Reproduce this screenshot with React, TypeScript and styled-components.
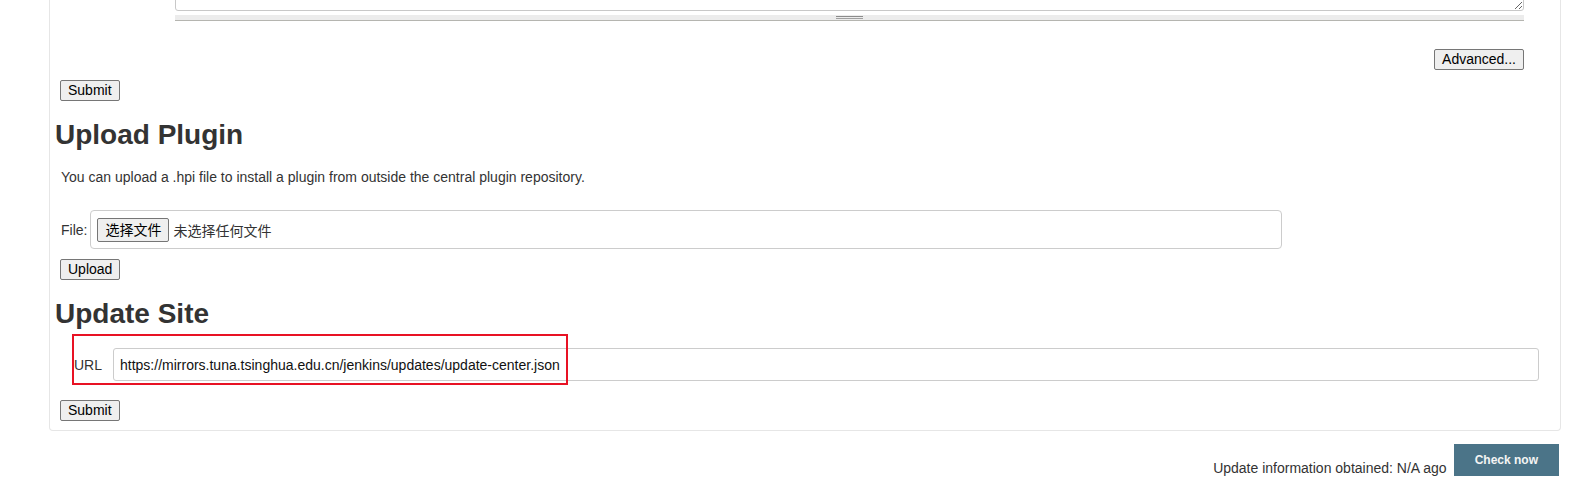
import styled, { createGlobalStyle } from 'styled-components';

const GlobalStyle = createGlobalStyle`
  body {
    margin: 0;
    background: #fff;
    color: #333;
    font-family: 'Liberation Sans', Arial, sans-serif;
    font-size: 14px;
    overflow: hidden;
  }
`;

const App = () => {
  return (
    <>
      <GlobalStyle />
      <Panel>
        <TextareaRow>
          <Textarea defaultValue="" />
          <GrabBar />
        </TextareaRow>
        <AdvancedRow>
          <Button type="button">Advanced...</Button>
        </AdvancedRow>
        <Button type="button" $top={10}>
          Submit
        </Button>

        <Heading>Upload Plugin</Heading>
        <Note>
          You can upload a .hpi file to install a plugin from outside the
          central plugin repository.
        </Note>
        <FileRow>
          <Label>File:</Label>
          <FileBox>
            <ChooseButton type="button">选择文件</ChooseButton>
            <NoFile>未选择任何文件</NoFile>
          </FileBox>
        </FileRow>
        <Button type="button" $top={10}>
          Upload
        </Button>

        <Heading>Update Site</Heading>
        <UrlRow>
          <Label>URL</Label>
          <UrlInput
            type="text"
            defaultValue="https://mirrors.tuna.tsinghua.edu.cn/jenkins/updates/update-center.json"
          />
          <Highlight />
        </UrlRow>
        <Button type="button" $top={19}>
          Submit
        </Button>
      </Panel>

      <Footer>
        <Obtained>Update information obtained: N/A ago</Obtained>
        <CheckButton type="button">Check now</CheckButton>
      </Footer>
    </>
  );
};

const Panel = styled.div`
  margin: -49px 14px 0 49px;
  padding: 0 0 9px 3px;
  border: 1px solid #e6e6e6;
  border-top: none;
  border-radius: 0 0 4px 4px;
`;

const TextareaRow = styled.div`
  margin: 0 36px 0 122px;
`;

const Textarea = styled.textarea`
  display: block;
  box-sizing: border-box;
  width: 100%;
  height: 60px;
  margin: 0;
  border: 1px solid #c8c8c8;
  border-radius: 3px;
  resize: vertical;
  font: 14px 'Liberation Mono', monospace;
`;

const GrabBar = styled.div`
  display: flex;
  justify-content: center;
  align-items: center;
  height: 5px;
  margin-top: 4px;
  background: #ececec;
  border-bottom: 1px solid #b5b5b0;

  &:after {
    content: '';
    width: 27px;
    height: 1px;
    border-top: 1px solid #8c8c8c;
    border-bottom: 1px solid #a0a0a0;
  }
`;

const AdvancedRow = styled.div`
  display: flex;
  justify-content: flex-end;
  margin: 28px 36px 0 0;
`;

const Button = styled.button<{ $top?: number }>`
  display: block;
  margin: ${(p) => (p.$top ? `${p.$top}px 0 0 7px` : '0')};
  padding: 1px 7px;
  background: #efefef;
  border: 1px solid #767676;
  border-radius: 2px;
  color: #000;
  font-family: 'Liberation Sans', Arial, sans-serif;
  font-size: 14px;
  line-height: 17px;
`;

const Heading = styled.h1`
  margin: 18px 0 18px 2px;
  color: #333;
  font-size: 28px;
  line-height: 32px;
  font-weight: bold;
`;

const Note = styled.p`
  margin: 0 0 0 8px;
  line-height: 16px;
`;

const FileRow = styled.div`
  display: flex;
  align-items: center;
  margin: 25px 0 0 8px;
`;

const Label = styled.span`
  color: #333;
  line-height: 16px;
`;

const FileBox = styled.div`
  display: flex;
  align-items: center;
  box-sizing: border-box;
  width: 1192px;
  height: 39px;
  margin-left: 3px;
  padding: 0 6px;
  border: 1px solid #ccc;
  border-radius: 4px;
`;

const ChooseButton = styled.button`
  padding: 1px 7px;
  background: #efefef;
  border: 1px solid #767676;
  border-radius: 2px;
  color: #000;
  font-family: 'Liberation Sans', 'Noto Sans CJK SC', sans-serif;
  font-size: 14px;
  line-height: 20px;
`;

const NoFile = styled.span`
  margin-left: 4px;
  color: #333;
  font-family: 'Liberation Sans', 'Noto Sans CJK SC', sans-serif;
  font-size: 14px;
`;

const UrlRow = styled.div`
  position: relative;
  display: flex;
  align-items: center;
  gap: 11px;
  margin: 0 21px 0 0;
  padding-left: 21px;
`;

const UrlInput = styled.input`
  flex: 1;
  box-sizing: border-box;
  height: 33px;
  padding: 0 6px;
  border: 1px solid #ccc;
  border-radius: 3px;
  color: #111;
  font-family: 'Liberation Sans', Arial, sans-serif;
  font-size: 14px;
`;

/* red annotation drawn over the screenshot */
const Highlight = styled.div`
  position: absolute;
  left: 19px;
  top: -14px;
  box-sizing: border-box;
  width: 496px;
  height: 51px;
  border: 2px solid #e81224;
  pointer-events: none;
`;

const Footer = styled.div`
  display: flex;
  justify-content: flex-end;
  align-items: flex-end;
  gap: 7px;
  margin-top: 13px;
  padding-right: 16px;
`;

const Obtained = styled.span`
  color: #333;
  line-height: 16px;
`;

const CheckButton = styled.button`
  height: 32px;
  padding: 0 21px;
  background: #4b7488;
  border: none;
  color: #f4f4f4;
  font-family: 'Liberation Sans', Arial, sans-serif;
  font-size: 12px;
  font-weight: bold;
`;

export default App;
